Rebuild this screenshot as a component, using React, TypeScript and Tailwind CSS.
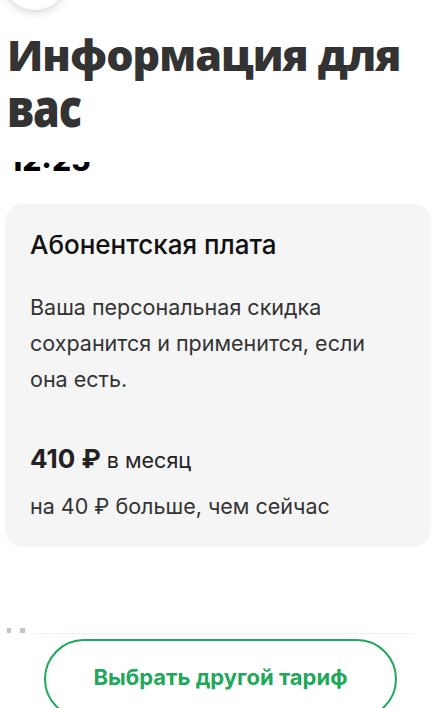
import React from 'react';

const sans = { fontFamily: 'Inter, "Noto Sans", sans-serif' };
const heading = { fontFamily: '"Open Sans", "Noto Sans", sans-serif' };

// Floating round button peeking from the top edge
const FloatingButton = () => (
  <div className="absolute left-[3px] top-[-54px] h-16 w-16 rounded-full bg-white shadow-[0_2px_10px_rgba(0,0,0,0.18)]" />
);

const FeeCard = () => (
  <div className="ml-[5px] mt-[33px] w-[426px] rounded-[18px] bg-[#f5f5f5] px-[25px] pt-[25px] pb-[23px]">
    <h2 className="text-[26px] font-medium leading-[32px] text-[#111]">Абонентская плата</h2>
    <p className="mt-[28px] text-[21.5px] leading-[36px] text-[#333]">
      Ваша персональная скидка сохранится и применится, если она есть.
    </p>
    <div className="mt-[44px] leading-[36px] text-[#222]">
      <span className="text-[26px] font-bold">410 ₽</span>
      <span className="text-[21.5px]"> в месяц</span>
    </div>
    <p className="mt-[8px] text-[21.5px] leading-[36px] text-[#333]">на 40 ₽ больше, чем сейчас</p>
  </div>
);

export default function App() {
  return (
    <div className="relative h-[708px] w-[432px] overflow-hidden bg-white" style={sans}>
      <FloatingButton />

      <h1 className="pl-[7px] pt-[28px] text-[43px] font-extrabold leading-[54px] tracking-[-1px] text-[#333]" style={heading}>
        <span className="block">Информация для</span>
        <span className="mt-[2px] block origin-[0_44px] scale-y-[1.24]">вас</span>
      </h1>

      {/* clock scrolled under the header, only its lower edge shows */}
      <div className="mt-[24px] h-[9px] overflow-hidden pl-[9px]">
        <div className="mt-[-17px] text-[30px] font-extrabold leading-none text-black">12:25</div>
      </div>

      <FeeCard />

      <div className="mt-[80px] flex items-center gap-[9px] pl-[7px]">
        <span className="h-[5px] w-[4px] bg-[#c4c4c4]" />
        <span className="h-[5px] w-[5px] bg-[#c4c4c4]" />
        <span className="mt-[6px] h-px w-[380px] bg-[#f0f0f0]" />
      </div>

      <div className="mt-[5px] pl-[44px]">
        <button className="h-[80px] w-[353px] rounded-full border-2 border-[#1fa85a] pb-[4px] text-[22px] font-bold text-[#1fa85a]">
          Выбрать другой тариф
        </button>
      </div>
    </div>
  );
}
